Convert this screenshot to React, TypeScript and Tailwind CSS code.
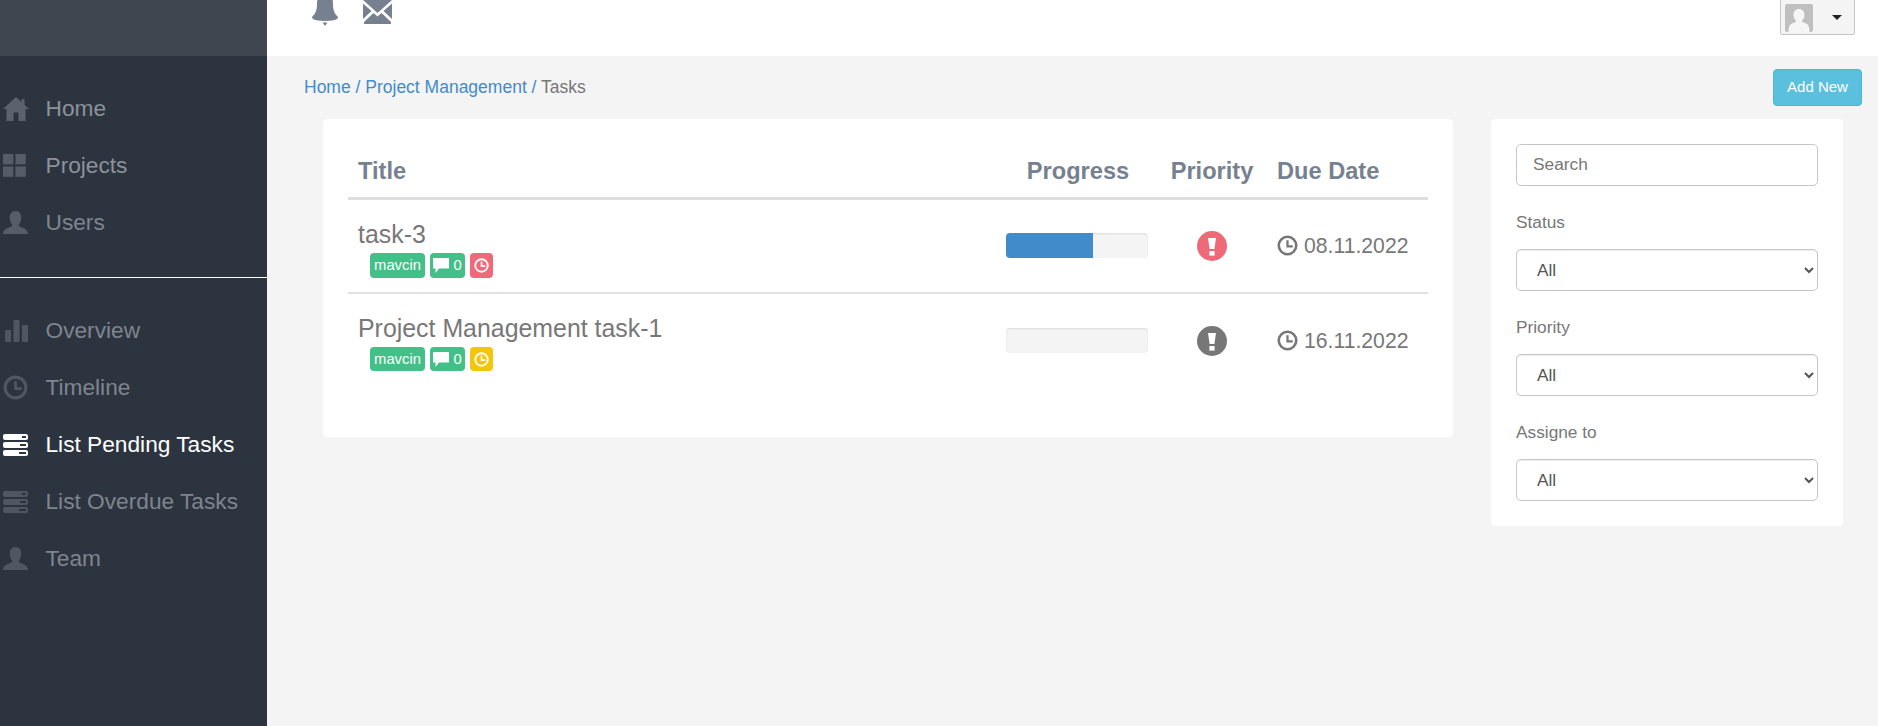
import React from "react";

type IconProps = { className?: string };

const HomeIcon = ({ className }: IconProps) => (
  <svg viewBox="0 0 26 24" className={className} fill="currentColor">
    <path d="M13 0 L18.5 5 V2 H21.5 V7.8 L26 12 H22.5 V24 H15.5 V15.5 H10.5 V24 H3.5 V12 H0 Z" />
  </svg>
);
const GridIcon = ({ className }: IconProps) => (
  <svg viewBox="0 0 24 24" className={className} fill="currentColor">
    <rect x="0" y="0" width="10.8" height="10.8" />
    <rect x="13" y="0" width="10.8" height="10.8" />
    <rect x="0" y="13" width="10.8" height="10.8" />
    <rect x="13" y="13" width="10.8" height="10.8" />
  </svg>
);
const UserIcon = ({ className }: IconProps) => (
  <svg viewBox="0 0 26 24" className={className} fill="currentColor">
    <path d="M13 0 C17 0 19 3 19 7 C19 10 18 12.5 16.5 14 C16.5 15.5 17 16 19 17 C23 18.5 26 20 26 24 H0 C0 20 3 18.5 7 17 C9 16 9.5 15.5 9.5 14 C8 12.5 7 10 7 7 C7 3 9 0 13 0 Z" />
  </svg>
);
const StatsIcon = ({ className }: IconProps) => (
  <svg viewBox="0 0 23 22" className={className} fill="currentColor">
    <rect x="0" y="10" width="6" height="12" rx="1" />
    <rect x="8.5" y="0" width="6" height="22" rx="1" />
    <rect x="17" y="5" width="6" height="17" rx="1" />
  </svg>
);
const ClockIcon = ({ className }: IconProps) => (
  <svg viewBox="0 0 24 24" className={className} fill="none" stroke="currentColor">
    <circle cx="12" cy="12" r="10" strokeWidth="3" />
    <path d="M12 6 V13 H18" strokeWidth="2.6" />
  </svg>
);
const TasksIcon = ({ className }: IconProps) => (
  <svg viewBox="0 0 25 22" className={className}>
    <path
      fill="currentColor"
      fillRule="evenodd"
      d="M2 0 H23 A2 2 0 0 1 25 2 V4 A2 2 0 0 1 23 6 H2 A2 2 0 0 1 0 4 V2 A2 2 0 0 1 2 0 Z M19 2 V4 H23 V2 Z M2 8 H23 A2 2 0 0 1 25 10 V12 A2 2 0 0 1 23 14 H2 A2 2 0 0 1 0 12 V10 A2 2 0 0 1 2 8 Z M17 10 V12 H23 V10 Z M2 16 H23 A2 2 0 0 1 25 18 V20 A2 2 0 0 1 23 22 H2 A2 2 0 0 1 0 20 V18 A2 2 0 0 1 2 16 Z M16 18 V20 H23 V18 Z"
    />
  </svg>
);
const BellIcon = ({ className }: IconProps) => (
  <svg viewBox="0 0 26 34" className={className} fill="currentColor">
    <path d="M13 0 C19 0 21 5 21 11 C21 18 23 21 26 24 C26 26 24 27 20 27.5 C16 28 10 28 6 27.5 C2 27 0 26 0 24 C3 21 5 18 5 11 C5 5 7 0 13 0 Z" />
    <path d="M10.5 29.5 H15.5 L13 33 Z" />
  </svg>
);
const MailIcon = ({ className }: IconProps) => (
  <svg viewBox="0 0 29 24" className={className} fill="currentColor">
    <path d="M0 0 H29 L14.5 13 Z" />
    <path d="M0 3.5 L8.5 11 L0 19 Z" />
    <path d="M29 3.5 L20.5 11 L29 19 Z" />
    <path d="M10.5 13 L14.5 16.5 L18.5 13 L28 22 V24 H1 V22 Z" />
  </svg>
);
const CommentIcon = ({ className }: IconProps) => (
  <svg viewBox="0 0 16 15" className={className} fill="currentColor">
    <path d="M0 0 H16 V10.5 H6 L2.5 15 V10.5 H0 Z" />
  </svg>
);
const AlertIcon = ({ className }: IconProps) => (
  <svg viewBox="0 0 30 30" className={className}>
    <circle cx="15" cy="15" r="15" fill="currentColor" />
    <path d="M11 7 H19 L17.4 18 H12.6 Z" fill="#fff" />
    <rect x="12.4" y="20" width="5.2" height="4.6" fill="#fff" />
  </svg>
);
const Avatar = () => (
  <svg viewBox="0 0 28 28" className="block w-[28px] h-[28px]">
    <rect width="28" height="28" rx="2" fill="#bfbfbf" />
    <path d="M14 5 C17.5 5 19.5 7.5 19.5 11 C19.5 13.5 18.5 15.5 17 16.5 C17 18 18 18.5 20 19 C23 20 24.5 22 24.5 28 H3.5 C3.5 22 5 20 8 19 C10 18.5 11 18 11 16.5 C9.5 15.5 8.5 13.5 8.5 11 C8.5 7.5 10.5 5 14 5 Z" fill="#f6f6f6" />
  </svg>
);

const navTop = [
  { label: "Home", Icon: HomeIcon, text: "text-[#8d929a]", icon: "text-[#5a626d]", cls: "w-[26px] h-[24px]" },
  { label: "Projects", Icon: GridIcon, text: "text-[#8d929a]", icon: "text-[#555d68]", cls: "w-[23px] h-[23px]" },
  { label: "Users", Icon: UserIcon, text: "text-[#7f858e]", icon: "text-[#555d68]", cls: "w-[25px] h-[23px]" },
];
const navBottom = [
  { label: "Overview", Icon: StatsIcon, text: "text-[#7f858e]", icon: "text-[#4f5763]", cls: "w-[23px] h-[22px] ml-[2px]" },
  { label: "Timeline", Icon: ClockIcon, text: "text-[#7f858e]", icon: "text-[#4f5763]", cls: "w-[25px] h-[25px]" },
  { label: "List Pending Tasks", Icon: TasksIcon, text: "text-white", icon: "text-white", cls: "w-[25px] h-[22px]" },
  { label: "List Overdue Tasks", Icon: TasksIcon, text: "text-[#7f858e]", icon: "text-[#4f5763]", cls: "w-[25px] h-[22px]" },
  { label: "Team", Icon: UserIcon, text: "text-[#7f858e]", icon: "text-[#4f5763]", cls: "w-[25px] h-[23px]" },
];

type NavItem = (typeof navTop)[number];

const NavRow = ({ item }: { item: NavItem }) => (
  <li className="h-[57px] flex items-center pl-[3px]">
    <span className="w-[42.5px] flex-none flex items-center">
      <item.Icon className={`${item.cls} ${item.icon}`} />
    </span>
    <span className={`text-[22.7px] leading-none ${item.text}`}>{item.label}</span>
  </li>
);

const tasks = [
  {
    title: "task-3",
    progress: "w-[61%]",
    clockBadge: "bg-[#ef6a78]",
    priority: "text-[#ef6a78]",
    due: "08.11.2022",
    row: "h-[95px] border-b-2 border-[#e2e2e2]",
    badgeH: "h-[25px]",
  },
  {
    title: "Project Management task-1",
    progress: "w-0",
    clockBadge: "bg-[#f3c60c]",
    priority: "text-[#777777]",
    due: "16.11.2022",
    row: "h-[94px]",
    badgeH: "h-[24px]",
  },
];

const FilterSelect = ({ label }: { label: string }) => (
  <div>
    <label className="block text-[17.3px] leading-[20px] text-[#777777] mt-[26px] mb-[17px]">{label}</label>
    <select className="block w-full h-[42px] pl-[16px] rounded-[5px] border border-[#c6c6c6] shadow-[inset_0_1px_1px_rgba(0,0,0,0.075)] bg-white text-[17.3px] text-[#555555]">
      <option>All</option>
    </select>
  </div>
);

export default function App() {
  return (
    <div className="flex h-screen w-full overflow-hidden bg-[#f4f4f4] font-['Liberation_Sans',Arial,sans-serif]">
      <aside className="w-[267px] flex-none bg-[#2c3440]">
        <div className="h-[56px] bg-[#404650]" />
        <ul className="pt-[24px]">
          {navTop.map((item) => (
            <NavRow key={item.label} item={item} />
          ))}
        </ul>
        <div className="h-[1px] bg-white mt-[26px] mb-[24px]" />
        <ul>
          {navBottom.map((item) => (
            <NavRow key={item.label} item={item} />
          ))}
        </ul>
      </aside>

      <main className="flex-1 min-w-0">
        <header className="h-[56px] bg-white flex items-start justify-between overflow-hidden pl-[45px] pr-[23px]">
          <div className="flex items-start gap-[25px]">
            <BellIcon className="w-[26px] h-[34px] -mt-[7px] text-[#76808e]" />
            <MailIcon className="w-[29px] h-[24px] text-[#76808e]" />
          </div>
          <div className="-mt-[4px] h-[39px] w-[75px] flex items-center bg-[#f4f4f4] border border-[#c6c6c6] rounded-[2px] pl-[4px] pt-[4px]">
            <Avatar />
            <span className="ml-[19px] w-0 h-0 border-x-[5px] border-x-transparent border-t-[5px] border-t-[#222222]" />
          </div>
        </header>

        <div className="h-[63px] pl-[37px] pr-[16px] pt-[13px] flex items-start justify-between">
          <nav className="text-[17.5px] leading-[36px] text-[#428bca]">
            Home / Project Management / <span className="text-[#777777]">Tasks</span>
          </nav>
          <button className="h-[37px] w-[89px] rounded-[4px] bg-[#5bc0de] border border-[#46b8da] text-white text-[15px]">
            Add New
          </button>
        </div>

        <div className="flex items-start gap-[38px] pl-[56px]">
          <section className="w-[1130px] h-[318px] bg-white rounded-[4px] pt-[24px] px-[25px]">
            <table className="w-[1080px] table-fixed border-collapse">
              <colgroup>
                <col className="w-[644px]" />
                <col className="w-[172px]" />
                <col className="w-[96px]" />
                <col className="w-[168px]" />
              </colgroup>
              <thead>
                <tr className="h-[55px] border-b-[3px] border-[#dddddd] text-[23.6px] text-[#76818f] font-bold">
                  <th className="text-left pl-[10px] pt-[4px] font-bold">Title</th>
                  <th className="text-center pt-[4px] font-bold">Progress</th>
                  <th className="text-center pt-[4px] font-bold whitespace-nowrap">Priority</th>
                  <th className="text-left pl-[17px] pt-[4px] font-bold">Due Date</th>
                </tr>
              </thead>
              <tbody>
                {tasks.map((t) => (
                  <tr key={t.title} className={t.row}>
                    <td className="pl-[10px] align-top pt-[20px]">
                      <div className="text-[24.9px] leading-[28px] text-[#777777]">{t.title}</div>
                      <div className="flex gap-[5px] pl-[12px] mt-[5px] text-white text-[14.8px]">
                        <span className={`${t.badgeH} w-[55px] rounded-[4px] bg-[#43bf88] flex items-center justify-center`}>mavcin</span>
                        <span className={`${t.badgeH} w-[35px] rounded-[4px] bg-[#43bf88] flex items-center justify-center gap-[4px]`}>
                          <CommentIcon className="w-[16px] h-[15px]" />
                          0
                        </span>
                        <span className={`${t.badgeH} w-[23px] rounded-[4px] ${t.clockBadge} flex items-center justify-center`}>
                          <ClockIcon className="w-[15px] h-[15px] text-white" />
                        </span>
                      </div>
                    </td>
                    <td className="align-middle">
                      <div className="ml-[14px] w-[142px] h-[25px] rounded-[4px] bg-[#f4f4f4] shadow-[inset_0_1px_2px_rgba(0,0,0,0.1)] overflow-hidden">
                        <div className={`h-full bg-[#428bca] ${t.progress}`} />
                      </div>
                    </td>
                    <td className="align-middle">
                      <AlertIcon className={`block mx-auto w-[30px] h-[30px] ${t.priority}`} />
                    </td>
                    <td className="align-middle pl-[17px]">
                      <div className="flex items-center text-[21.2px] text-[#777777] whitespace-nowrap">
                        <ClockIcon className="w-[21px] h-[21px] mr-[6px]" />
                        {t.due}
                      </div>
                    </td>
                  </tr>
                ))}
              </tbody>
            </table>
          </section>

          <aside className="w-[352px] h-[407px] bg-white rounded-[4px] pt-[25px] px-[25px]">
            <input
              placeholder="Search"
              className="block w-full h-[42px] px-[16px] pb-[2px] rounded-[5px] border border-[#c6c6c6] text-[17.3px] text-[#555555] placeholder:text-[#777777] bg-white"
            />
            <FilterSelect label="Status" />
            <FilterSelect label="Priority" />
            <FilterSelect label="Assigne to" />
          </aside>
        </div>
      </main>
    </div>
  );
}
